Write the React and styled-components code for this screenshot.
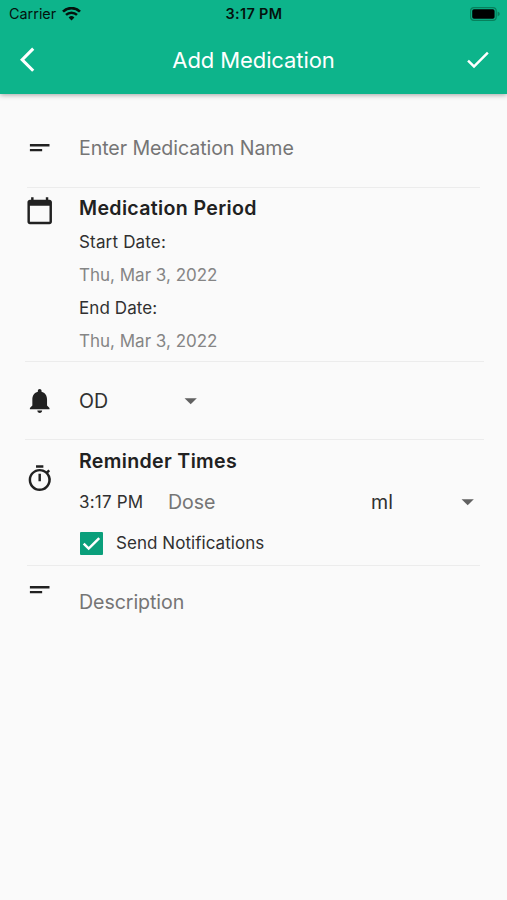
import { useState } from "react";
import styled, { createGlobalStyle } from "styled-components"
import {
    MdArrowBackIos,
    MdArrowDropDown,
    MdCalendarToday,
    MdCheck,
    MdNotifications,
    MdOutlineTimer,
    MdShortText,
} from "react-icons/md";


const App = () => {
    const [notify,setNotify]=useState(true)

  return (
    <>
    <GlobalStyle />
    <Screen>
        <Header>
            <StatusBar>
                <Carrier>
                    <CarrierName>Carrier</CarrierName>
                    <WifiIcon />
                </Carrier>
                <Clock>3:17 PM</Clock>
                <BatteryIcon />
            </StatusBar>
            <NavBar>
                <NavButton $pad="0 0 0 20px"><MdArrowBackIos size={29.4} /></NavButton>
                <Title>Add Medication</Title>
                <NavButton $pad="0 0 0 56px"><MdCheck size={29.4} /></NavButton>
            </NavBar>
        </Header>

        <Form>
            <Row $height={93}>
                <IconBox $top={39}><MdShortText /></IconBox>
                <Content $top={40}>
                    <Hint>Enter Medication Name</Hint>
                </Content>
            </Row>
            <Divider $left={27} $right={27} />

            <Row $height={173}>
                <IconBox $top={8}><MdCalendarToday /></IconBox>
                <Content $top={6}>
                    <Heading>Medication Period</Heading>
                    <Dates>
                        <Label $spacing={0.17}>Start Date:</Label>
                        <DateText>Thu, Mar 3, 2022</DateText>
                        <Label $spacing={0.1}>End Date:</Label>
                        <DateText>Thu, Mar 3, 2022</DateText>
                    </Dates>
                </Content>
            </Row>
            <Divider $left={25} $right={23} />

            <Row $height={77}>
                <IconBox $top={24}><MdNotifications /></IconBox>
                <Content $top={25}>
                    <Select $width={126}>
                        <Value>OD</Value>
                        <MdArrowDropDown />
                    </Select>
                </Content>
            </Row>
            <Divider $left={25} $right={23} />

            <Row $height={125}>
                <IconBox $top={24}><MdOutlineTimer /></IconBox>
                <Content $top={7}>
                    <Heading>Reminder Times</Heading>
                    <DoseRow>
                        <Time $spacing={0.2}>3:17 PM</Time>
                        <Dose>Dose</Dose>
                        <Select $width={111}>
                            <Value>ml</Value>
                            <MdArrowDropDown />
                        </Select>
                    </DoseRow>
                    <CheckRow onClick={()=>setNotify(!notify)}>
                        <CheckBox $checked={notify}>{notify && <CheckMark />}</CheckBox>
                        <Label $spacing={0.05}>Send Notifications</Label>
                    </CheckRow>
                </Content>
            </Row>
            <Divider $left={27} $right={27} />

            <Row $height={80}>
                <IconBox $top={9}><MdShortText /></IconBox>
                <Content $top={22}>
                    <Hint>Description</Hint>
                </Content>
            </Row>
        </Form>
    </Screen>
    </>
  )
}

const WifiIcon = () => (
    <svg width="19" height="14" viewBox="0 0 19 14">
        <path d="M1 4.6 A12.2 12.2 0 0 1 18 4.6" fill="none" stroke="#04120d" strokeWidth="2.7" />
        <path d="M4 7.9 A8 8 0 0 1 15 7.9" fill="none" stroke="#04120d" strokeWidth="2.5" />
        <path d="M6.6 10.4 A4.2 4.2 0 0 1 12.4 10.4 L9.5 13.4 Z" fill="#04120d" />
    </svg>
)

const BatteryIcon = () => (
    <svg width="31" height="14" viewBox="0 0 31 14">
        <rect x="0.6" y="0.6" width="25.6" height="12.8" rx="3.4" fill="none" stroke="#07805c" strokeWidth="1.2" />
        <rect x="2.2" y="2.2" width="22.4" height="9.6" rx="1.8" fill="#000" />
        <path d="M27.6 4.6 Q29.8 5.6 29.8 7 Q29.8 8.4 27.6 9.4 Z" fill="#07805c" />
    </svg>
)

const CheckMark = () => (
    <svg width="23" height="23" viewBox="0 0 23 23">
        <path d="M3.7 11.6 L8.7 16.6 L19.2 6.1" fill="none" stroke="#fff" strokeWidth="2.5" />
    </svg>
)

export default App



const GlobalStyle=createGlobalStyle`
    *{
        box-sizing: border-box;
    }
    body{
        margin: 0;
        background: #fafafa;
        font-family: Inter, "Liberation Sans", sans-serif;
    }
`
const Screen=styled.div`
    width: 507px;
    height: 900px;
    overflow: hidden;
    background: #fafafa;
    color: #212121;
`
const Header=styled.header`
    height: 94px;
    background: #0db48b;
    box-shadow: 0 1px 5px rgba(0, 0, 0, 0.35);
`
const StatusBar=styled.div`
    display: grid;
    grid-template-columns: 1fr auto 1fr;
    align-items: center;
    height: 27px;
    padding: 0 6px 0 9px;
    color: #04120d;
    & > svg{
        justify-self: end;
    }
`
const Carrier=styled.div`
    display: flex;
    align-items: center;
    gap: 6px;
`
const CarrierName=styled.span`
    font-size: 14.4px;
`
const Clock=styled.span`
    font-size: 14.4px;
    font-weight: 600;
    letter-spacing: 0.35px;
    margin-right: 2px;
`
const NavBar=styled.div`
    display: grid;
    grid-template-columns: 100px 1fr 100px;
    align-items: center;
    height: 66px;
    color: #fff;
`
const NavButton=styled.div`
    display: flex;
    padding: ${props=>props.$pad};
`
const Title=styled.div`
    text-align: center;
    font-size: 22px;
    letter-spacing: -0.1px;
`
const Form=styled.div`
    display: flex;
    flex-direction: column;
`
const Row=styled.div`
    display: flex;
    height: ${props=>props.$height}px;
    padding: 0 25px;
`
const Divider=styled.div`
    height: 1px;
    margin: 0 ${props=>props.$right}px 0 ${props=>props.$left}px;
    background: #ececec;
`
const IconBox=styled.div`
    flex-shrink: 0;
    width: 54px;
    padding-top: ${props=>props.$top}px;
    font-size: 29.4px;
    svg{
        display: block;
    }
`
const Content=styled.div`
    flex: 1;
    min-width: 0;
    padding-top: ${props=>props.$top}px;
`
const Hint=styled.div`
    font-size: 19.6px;
    line-height: 28px;
    letter-spacing: -0.08px;
    color: #757575;
`
const Heading=styled.div`
    font-size: 19.6px;
    font-weight: 600;
    line-height: 28px;
    letter-spacing: 0.33px;
`
const Dates=styled.div`
    display: grid;
    grid-auto-rows: 33px;
    align-items: center;
    padding-top: 3px;
`
const Label=styled.div`
    font-size: 17px;
    letter-spacing: ${props=>props.$spacing || 0}px;
    color: #303030;
`
const DateText=styled(Label)`
    color: #858585;
`
const Select=styled.div`
    display: flex;
    align-items: center;
    justify-content: space-between;
    flex-shrink: 0;
    width: ${props=>props.$width}px;
    height: 28px;
    svg{
        font-size: 29.4px;
        color: #616161;
    }
`
const Value=styled.span`
    font-size: 19.6px;
    color: #303030;
`
const DoseRow=styled.div`
    display: flex;
    align-items: center;
    height: 28px;
    margin-top: 13px;
`
const Time=styled(Label)`
    width: 89px;
`
const Dose=styled(Hint)`
    width: 203px;
`
const CheckRow=styled.div`
    display: flex;
    align-items: center;
    gap: 13px;
    height: 28px;
    margin-top: 13px;
    padding-left: 1px;
`
const CheckBox=styled.div`
    width: 23px;
    height: 23px;
    border-radius: 1px;
    background: ${props=>props.$checked ? "#0a9f7b" : "transparent"};
`
